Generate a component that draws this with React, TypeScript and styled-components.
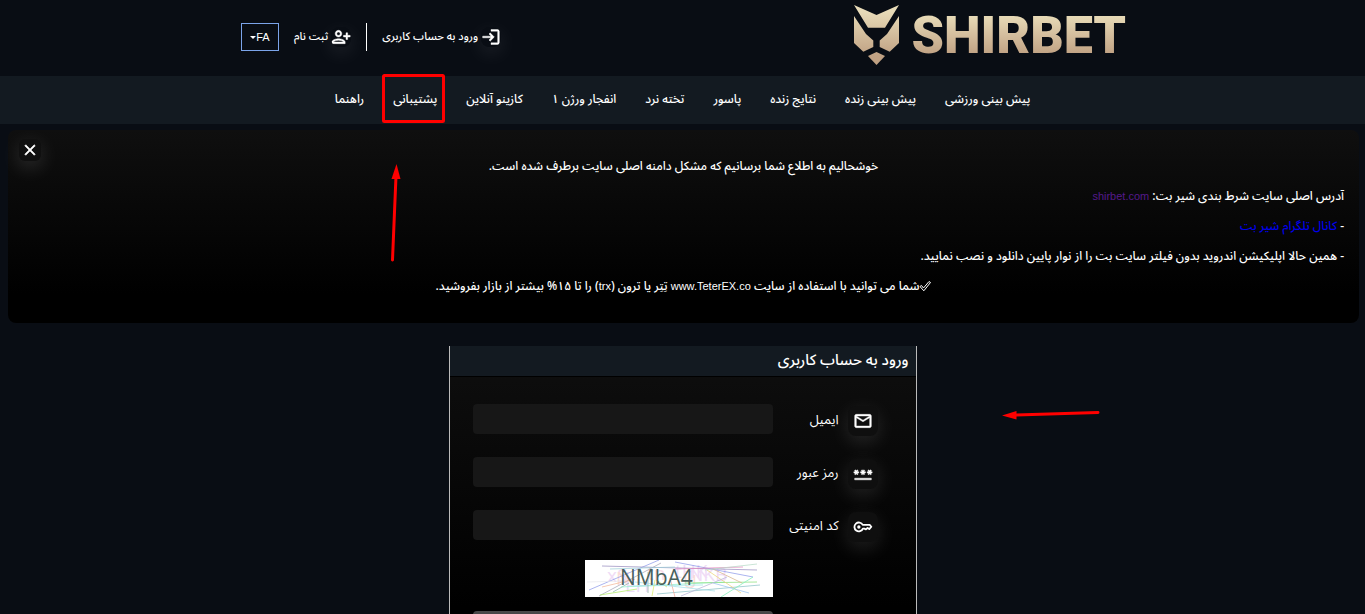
import React from "react";
import styled, { createGlobalStyle } from "styled-components";
import {
  MdClose,
  MdLogin,
  MdMailOutline,
  MdOutlinePassword,
  MdOutlinePersonAddAlt1,
} from "react-icons/md";

const GlobalStyle = createGlobalStyle`
  * { box-sizing: border-box; }
  html { height: 100%; overflow: hidden; background: #090d14; }
  body {
    margin: 0;
    color: #fff;
    direction: rtl;
    font-family: "Noto Sans Arabic", "Liberation Sans", sans-serif;
    font-size: 12px;
    font-weight: 500;
  }
  button, input { font: inherit; color: inherit; }
`;

const Page = styled.div`
  position: relative;
  height: 100vh;
  overflow: hidden;
`;

const Header = styled.header`
  display: flex;
  align-items: center;
  justify-content: space-between;
  width: 65%;
  height: 76px;
  margin: 0 auto;
`;

const Logo = styled.a`
  display: flex;
  align-items: center;
  gap: 12px;
  direction: ltr;
  text-decoration: none;
  padding-bottom: 6px;
`;

const Wordmark = styled.span`
  padding-top: 2px;
  font-family: Roboto, sans-serif;
  font-size: 52px;
  font-weight: 900;
  line-height: 60px;
  color: transparent;
  background: linear-gradient(#e8dbb8 18%, #c0a183 82%);
  background-clip: text;
  -webkit-background-clip: text;
`;

const Account = styled.div`
  display: flex;
  align-items: center;
  gap: 15px;
  padding: 0 0 2px 2px;
`;

const AccountLink = styled.a`
  display: flex;
  align-items: center;
  gap: 3px;
  color: #fff;
  font-size: 11px;
  line-height: 28px;
  text-decoration: none;
  white-space: nowrap;

  svg {
    border-radius: 8px;
    box-shadow: 0 6px 20px rgba(255, 255, 255, 0.1);
  }

  path:not([fill="none"]) { stroke-width: 0.5; }
`;

const Divider = styled.span`
  width: 1px;
  height: 28px;
  background: #fff;
`;

const Language = styled.button`
  display: flex;
  align-items: center;
  justify-content: center;
  width: 38px;
  height: 28px;
  padding: 0;
  border: 1px solid #7ba4ea;
  background: transparent;
  font-family: "Liberation Sans", sans-serif;
  font-size: 11px;
`;

const Caret = styled.span`
  border: 3px solid transparent;
  border-top-color: #fff;
  border-bottom-width: 0;
`;

const Nav = styled.nav`
  display: flex;
  justify-content: center;
  gap: 29px;
  height: 48px;
  background: #131a21;
`;

const NavLink = styled.a`
  color: #fff;
  line-height: 48px;
  text-decoration: none;
  white-space: nowrap;
`;

const Notice = styled.section`
  position: relative;
  margin: 6px 6px 0 8px;
  padding: 22px 15px 21px;
  border-radius: 8px;
  background: linear-gradient(#0f0f0f, #000 85%);
`;

const Line = styled.p<{ $centered?: boolean }>`
  margin: 0;
  line-height: 30px;
  text-align: ${(p) => (p.$centered ? "center" : "start")};
`;

const Latin = styled.bdi`
  font-family: "Liberation Sans", sans-serif;
  font-size: 11px;
  line-height: 1;
`;

const NoticeLink = styled.a<{ $visited?: boolean }>`
  color: ${(p) => (p.$visited ? "#551a8b" : "#0000ee")};
  text-decoration: none;
`;

const CheckMark = styled.svg`
  vertical-align: -2px;
  fill: none;
  stroke: currentColor;
`;

const CloseButton = styled.button`
  position: absolute;
  top: 9px;
  left: 11px;
  display: flex;
  align-items: center;
  justify-content: center;
  width: 22px;
  height: 22px;
  padding: 0;
  border: 0;
  border-radius: 6px;
  background: #101010;
  box-shadow: 0 6px 20px rgba(255, 255, 255, 0.15);

  path:not([fill="none"]) { stroke-width: 0.8; }
`;

const LoginForm = styled.form`
  width: 468px;
  max-width: 100%;
  margin: 23px auto 0;
  border: solid #bbb;
  border-width: 0 1px;
  background: linear-gradient(#0f0f0f, #000 260px);
`;

const FormTitle = styled.h1`
  margin: 0;
  padding: 0 7px 2px;
  border-bottom: 1px solid #000;
  background: #131a21;
  font-size: 15px;
  font-weight: 500;
  line-height: 28px;
`;

const Fields = styled.div`
  display: grid;
  grid-template-columns: 30px 1fr 300px;
  column-gap: 9px;
  row-gap: 21px;
  padding: 27px 38px 0 23px;
`;

const FieldIcon = styled.span`
  display: flex;
  align-items: center;
  justify-content: center;
  width: 30px;
  height: 30px;
  margin-top: 2px;
  border-radius: 8px;
  background: #0f0f0f;
  box-shadow: 0 6px 20px rgba(255, 255, 255, 0.12);
`;

const GlyphWeight = styled.span`
  display: flex;

  path:not([fill="none"]) { stroke-width: 0.5; }
`;

const Label = styled.label`
  font-size: 13px;
  font-weight: 400;
  line-height: 32px;
  white-space: nowrap;
`;

const TextInput = styled.input`
  width: 100%;
  height: 30px;
  padding: 0 8px;
  border: 0;
  border-radius: 4px;
  background: #171717;
`;

const Submission = styled.div`
  display: flex;
  flex-direction: column;
  gap: 14px;
  width: 300px;
  margin: 18px 143px 0 23px;
`;

const Captcha = styled.svg`
  display: block;
  background: #fff;
`;

const Submit = styled.button`
  height: 32px;
  border: 0;
  border-radius: 4px;
  background: linear-gradient(#4a4a4a, #222);
`;

const Annotations = styled.svg`
  position: absolute;
  top: 0;
  left: 0;
  pointer-events: none;
`;

function MailIcon() {
  return (
    <GlyphWeight>
      <MdMailOutline size={20} />
    </GlyphWeight>
  );
}

function PasswordIcon() {
  return (
    <GlyphWeight>
      <MdOutlinePassword size={20} />
    </GlyphWeight>
  );
}

function KeyIcon() {
  return (
    <svg width="20" height="20" viewBox="0 0 24 24" aria-hidden="true">
      <path
        d="M11.700 9.500H20L22 11.700 19.500 14.500 17.500 13.200 15.500 14.800 13.500 14H11.900A5.300 5.300 0 1 1 11.700 9.500Z"
        fill="none"
        stroke="currentColor"
        strokeWidth="2.200"
        strokeLinejoin="round"
      />
      <circle cx="7" cy="12" r="2" fill="currentColor" />
    </svg>
  );
}

const navItems = [
  "پیش بینی ورزشی",
  "پیش بینی زنده",
  "نتایج زنده",
  "پاسور",
  "تخته نرد",
  "انفجار ورژن ۱",
  "کازینو آنلاین",
  "پشتیبانی",
  "راهنما",
];

const fields = [
  { id: "email", label: "ایمیل", type: "email", Icon: MailIcon },
  { id: "password", label: "رمز عبور", type: "password", Icon: PasswordIcon },
  { id: "captcha", label: "کد امنیتی", type: "text", Icon: KeyIcon },
];

const captchaLines: [number, number, number, number, string][] = [
  [4, 30, 74, 0, "#8f9bea"],
  [14, 36, 76, 3, "#a7a7b8"],
  [17, 6, 172, 10, "#9a8fc0"],
  [25, 9, 90, 7, "#9fd0d8"],
  [15, 35, 52, 29, "#b4ec6a"],
  [17, 27, 50, 19, "#f4b89a"],
  [28, 32, 44, 23, "#8db8a8"],
  [36, 27, 140, 22, "#8ff0d0"],
  [48, 26, 118, 25, "#a0e8e8"],
  [90, 2, 168, 17, "#8f9bea"],
  [90, 9, 158, 7, "#e58bc0"],
  [72, 34, 175, 25, "#8ec3c8"],
  [100, 23, 172, 22, "#8ce07c"],
  [122, 10, 156, 33, "#ecd479"],
  [128, 9, 157, 23, "#d8b48c"],
  [128, 23, 164, 33, "#9cc4f0"],
  [136, 37, 168, 17, "#7ff0b8"],
  [96, 36, 142, 17, "#b9b4d8"],
  [120, 10, 172, 4, "#b8dcc8"],
  [67, 36, 70, 20, "#dcec6a"],
  [71, 20, 82, 27, "#c8e86a"],
  [85, 18, 90, 37, "#f0a898"],
  [63, 12, 63, 33, "#90b4a4"],
  [50, 22, 130, 31, "#a8e0e8"],
  [2, 22, 40, 21, "#e8e8ee"],
];

function CaptchaImage() {
  return (
    <Captcha width="188" height="37" viewBox="0 0 188 37" direction="ltr" role="img" aria-label="NMbA4">
      <g fontFamily="Open Sans, sans-serif" fontSize="19">
        <text x="22" y="22" fill="#f0dcf6">xS</text>
        <text x="31" y="25" fill="#fbdcd8">N</text>
        <text x="40" y="32" fill="#ecdcf8">EH</text>
        <text x="62" y="20" fill="#f8dcea">tn</text>
        <text x="90" y="18" fill="#f0dcf6">tHK</text>
        <text x="98" y="28" fill="#fbdcd8">U</text>
        <text x="104" y="21" fill="#f0dcf6">NKB</text>
      </g>
      {captchaLines.map(([x1, y1, x2, y2, stroke], i) => (
        <line key={i} x1={x1} y1={y1} x2={x2} y2={y2} stroke={stroke} strokeWidth="1" opacity="0.75" />
      ))}
      <text x="35" y="25" fontFamily="Open Sans, sans-serif" fontSize="21" fontWeight="500" fill="#48605c">
        NMbA4
      </text>
    </Captcha>
  );
}

export default function App() {
  return (
    <>
      <GlobalStyle />
      <Page>
        <Header>
          <Logo href="#" aria-label="SHIRBET">
            <svg width="45" height="60" viewBox="0 0 45 60" aria-hidden="true">
              <defs>
                <linearGradient id="gold" x1="0" y1="0" x2="0" y2="60" gradientUnits="userSpaceOnUse">
                  <stop offset="0.1" stopColor="#e8dbb8" />
                  <stop offset="0.85" stopColor="#c0a183" />
                </linearGradient>
              </defs>
              <g fill="url(#gold)">
                <path d="M0 0 22.500 10 45 0 31 22.700H14Z" />
                <path d="M0 11 12 29 19.300 35.500V42L9.300 46.700 0 38Z" />
                <path d="M45 11 33 29 25.700 35.500V42L35.700 46.700 45 38Z" />
                <path d="M22.500 47 31 51 22.500 60 14 51Z" />
              </g>
            </svg>
            <Wordmark>SHIRBET</Wordmark>
          </Logo>
          <Account>
            <AccountLink href="#login">
              <MdLogin size={20} />
              ورود به حساب کاربری
            </AccountLink>
            <Divider />
            <AccountLink href="#register">
              <MdOutlinePersonAddAlt1 size={20} />
              ثبت نام
            </AccountLink>
            <Language type="button" aria-haspopup="listbox">
              FA
              <Caret />
            </Language>
          </Account>
        </Header>

        <Nav>
          {navItems.map((item) => (
            <NavLink key={item} href="#">
              {item}
            </NavLink>
          ))}
        </Nav>

        <Notice>
          <CloseButton type="button" aria-label="بستن">
            <MdClose size={18} />
          </CloseButton>
          <Line $centered>خوشحالیم به اطلاع شما برسانیم که مشکل دامنه اصلی سایت برطرف شده است.</Line>
          <Line>
            آدرس اصلی سایت شرط بندی شیر بت:{" "}
            <NoticeLink href="#site" $visited>
              <Latin>shirbet.com</Latin>
            </NoticeLink>
          </Line>
          <Line>
            - <NoticeLink href="#telegram">کانال تلگرام شیر بت</NoticeLink>
          </Line>
          <Line>- همین حالا اپلیکیشن اندروید بدون فیلتر سایت بت را از نوار پایین دانلود و نصب نمایید.</Line>
          <Line $centered>
            <CheckMark width="12" height="12" viewBox="0 0 12 12" aria-hidden="true">
              <path d="M1 6.500 2.500 5.500 4.500 8 10 1.500 11.500 2.500 4.800 10.800Z" />
            </CheckMark>
            شما می توانید با استفاده از سایت <Latin>www.TeterEX.co</Latin> تِتِر یا ترون (<Latin>trx</Latin>) را تا ۱۵% بیشتر از بازار بفروشید.
          </Line>
        </Notice>

        <LoginForm>
          <FormTitle>ورود به حساب کاربری</FormTitle>
          <Fields>
            {fields.map(({ id, label, type, Icon }) => (
              <React.Fragment key={id}>
                <FieldIcon>
                  <Icon />
                </FieldIcon>
                <Label htmlFor={id}>{label}</Label>
                <TextInput id={id} type={type} />
              </React.Fragment>
            ))}
          </Fields>
          <Submission>
            <CaptchaImage />
            <Submit type="submit" aria-label="ورود" />
          </Submission>
        </LoginForm>

        <Annotations width="1365" height="614" viewBox="0 0 1365 614" aria-hidden="true">
          <rect x="383.500" y="75.500" width="60" height="46" rx="1" fill="none" stroke="#f00" strokeWidth="3" />
          <g stroke="#f00" strokeWidth="3" strokeLinecap="round">
            <path d="M392.500 260 396 176" />
            <path d="M1098 412.500 1014 415" />
          </g>
          <path d="M396.500 164 400.500 179H391.500Z" fill="#f00" />
          <path d="M1002 415.500 1016.500 411V419.500Z" fill="#f00" />
        </Annotations>
      </Page>
    </>
  );
}
